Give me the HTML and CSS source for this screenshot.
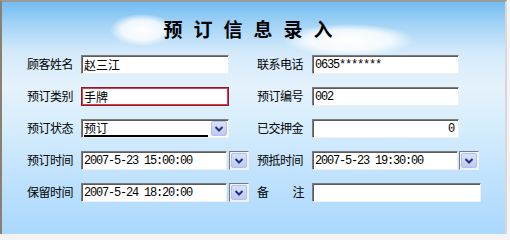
FILE: index.html
```html
<!DOCTYPE html>
<html lang="zh-CN">
<head>
  <meta charset="UTF-8">
  <title>预订信息录入</title>
  <link rel="stylesheet" href="styles.css">
</head>
<body>
<div class="window">
  <!-- 背景云 -->
  <span class="cloud cloud-a"></span>
  <span class="cloud cloud-b"></span>

  <h1 class="title">预订信息录入</h1>

  <div class="form">
    <span class="label">顾客姓名</span>
    <div class="field w148"><div class="box cn">赵三江</div></div>
    <span class="label">联系电话</span>
    <div class="field w147"><div class="box">0635*******</div></div>

    <span class="label">预订类别</span>
    <div class="field w148"><div class="box box-active cn">手牌</div></div>
    <span class="label">预订编号</span>
    <div class="field w147"><div class="box">002</div></div>

    <span class="label">预订状态</span>
    <div class="field w148">
      <div class="box combo">
        <span class="combo-text cn">预订</span>
        <span class="drop-btn">
          <svg width="10" height="8" viewBox="0 0 10 8"><polyline points="1.5,2 5,5.5 8.5,2" fill="none" stroke="#23347a" stroke-width="2"/></svg>
        </span>
      </div>
    </div>
    <span class="label">已交押金</span>
    <div class="field w147"><div class="box num">0</div></div>

    <span class="label">预订时间</span>
    <div class="field">
      <div class="box w146">2007-5-23 15:00:00</div>
      <span class="btn-frame">
        <span class="drop-btn">
          <svg width="10" height="8" viewBox="0 0 10 8"><polyline points="1.5,2 5,5.5 8.5,2" fill="none" stroke="#23347a" stroke-width="2"/></svg>
        </span>
      </span>
    </div>
    <span class="label">预抵时间</span>
    <div class="field">
      <div class="box w146 tight">2007-5-23 19:30:00</div>
      <span class="btn-frame">
        <span class="drop-btn">
          <svg width="10" height="8" viewBox="0 0 10 8"><polyline points="1.5,2 5,5.5 8.5,2" fill="none" stroke="#23347a" stroke-width="2"/></svg>
        </span>
      </span>
    </div>

    <span class="label">保留时间</span>
    <div class="field">
      <div class="box w146">2007-5-24 18:20:00</div>
      <span class="btn-frame">
        <span class="drop-btn">
          <svg width="10" height="8" viewBox="0 0 10 8"><polyline points="1.5,2 5,5.5 8.5,2" fill="none" stroke="#23347a" stroke-width="2"/></svg>
        </span>
      </span>
    </div>
    <span class="label label-spread"><span>备</span><span>注</span></span>
    <div class="field w169"><div class="box"></div></div>
  </div>
</div>
</body>
</html>
```

FILE: styles.css
```css
body {
  margin: 0;
  background-color: #f4f4f4;
  font-family: "Noto Sans CJK SC", sans-serif;
}

.window {
  position: relative;
  width: 503px;
  height: 232px;
  border-top: 2px solid #9a9a9a;
  border-left: 2px solid #8a8070;
  border-right: 2px solid #d8d8d8;
  overflow: hidden;
  background: linear-gradient(to bottom, #72bcf1 0, #a2d3f6 22px, #d4eafb 50px, #e4f2fc 85px, #d8eefc 120px, #c2e3fd 170px, #aad8fe 232px);
}

.cloud {
  position: absolute;
  border-radius: 50%;
  background: radial-gradient(ellipse at center, rgba(255, 255, 255, 1) 0, rgba(255, 255, 255, 0.8) 45%, rgba(255, 255, 255, 0) 72%);
}

.cloud-a {
  left: 108px;
  top: 12px;
  width: 64px;
  height: 32px;
}

.cloud-b {
  left: 282px;
  top: 22px;
  width: 130px;
  height: 32px;
}

.title {
  position: relative;
  margin: 0;
  padding-top: 16px;
  height: 22px;
  text-align: center;
  font-size: 19px;
  line-height: 22px;
  font-weight: 700;
  letter-spacing: 11px;
  color: #000;
}

.form {
  position: relative;
  display: grid;
  grid-template-columns: 54px 176px 55px auto;
  grid-auto-rows: 19px;
  row-gap: 13px;
  margin-top: 15px;
  padding-left: 25px;
}

.label {
  font-size: 12px;
  line-height: 18px;
  letter-spacing: -0.5px;
  white-space: nowrap;
  color: #000;
  width: 47px;
}

.label-spread {
  display: flex;
  justify-content: space-between;
}

.field {
  display: flex;
  gap: 2px;
}

.w146 { width: 146px; }
.w147 { width: 147px; }
.w148 { width: 148px; }
.w169 { width: 169px; }

.field > .box {
  flex: 1;
}

.field > .box.w146 {
  flex: none;
}

.box {
  box-sizing: border-box;
  height: 19px;
  padding: 1px 0 0 2px;
  background-color: #fff;
  border: 1px solid;
  border-color: #7c7c7c #f0f0f0 #f0f0f0 #7c7c7c;
  box-shadow: inset 1px 1px 0 #5c5c5c;
  font-family: "Liberation Mono", "Noto Sans CJK SC", monospace;
  font-size: 12px;
  letter-spacing: -1.2px;
  line-height: 16px;
  color: #000;
  white-space: nowrap;
  overflow: hidden;
}

.cn {
  font-family: "Noto Sans CJK SC", sans-serif;
  font-size: 12px;
  letter-spacing: 0;
  padding-top: 0;
  line-height: 17px;
}

.box-active {
  border: 1px solid #8a1c2a;
  box-shadow: inset 0 0 0 1px #d8404e;
}

.num {
  text-align: right;
  padding-right: 4px;
}

.combo {
  display: flex;
  align-items: center;
  padding: 0 1px 0 2px;
}

.combo-text {
  flex: 1;
  height: 14px;
  line-height: 14px;
  margin-right: 3px;
  border-bottom: 2px solid #000;
}

.drop-btn {
  box-sizing: border-box;
  display: flex;
  align-items: center;
  justify-content: center;
  width: 16px;
  height: 15px;
  background: linear-gradient(to bottom, #d8e2fb, #bccbf3);
  border: 1px solid #b2c0ec;
  border-radius: 2px;
}

.btn-frame {
  box-sizing: border-box;
  display: flex;
  align-items: center;
  justify-content: center;
  width: 20px;
  height: 19px;
  background-color: #eef2fb;
  border: 1px solid;
  border-color: #7c7c7c #f0f0f0 #f0f0f0 #7c7c7c;
}

.tight + .btn-frame {
  margin-left: -1px;
}
```
